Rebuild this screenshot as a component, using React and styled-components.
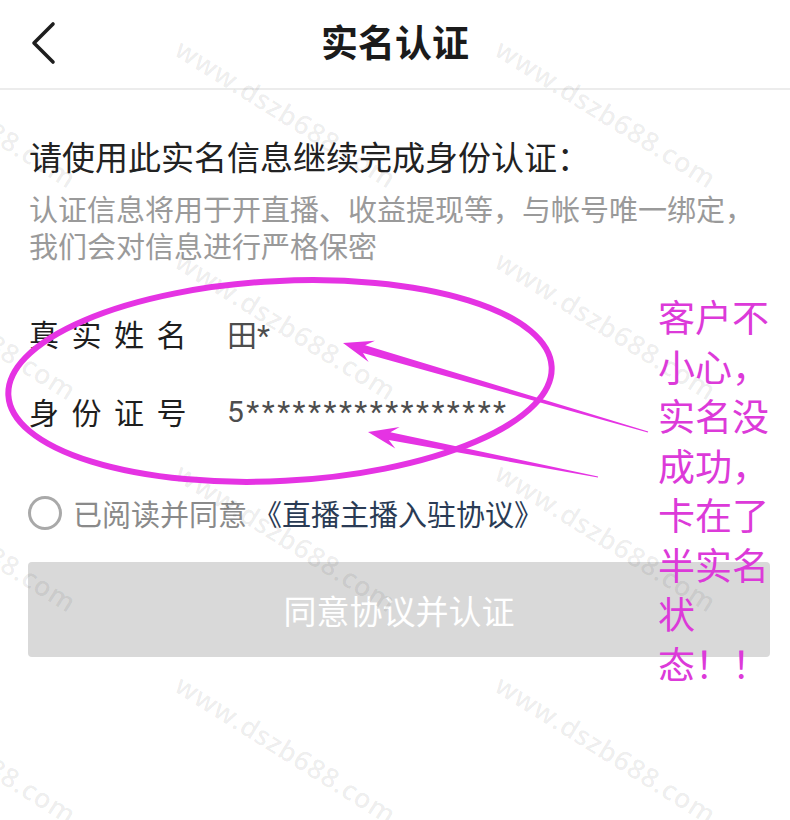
import React from 'react'
import styled, { createGlobalStyle } from 'styled-components'

const Global = createGlobalStyle`
  html, body { margin: 0; padding: 0; background: #fff; }
  body { font-family: "Noto Sans CJK SC", "Noto Sans", sans-serif; }
`

const MAGENTA = '#e533e3'

const Page = styled.div`
  position: relative;
  width: 790px;
  height: 820px;
  overflow: hidden;
  background: #fff;
`

const Header = styled.header`
  height: 88px;
  border-bottom: 2px solid #ececec;
  display: flex;
  align-items: center;
  justify-content: center;
  position: relative;
`

const Back = styled.button`
  position: absolute;
  left: 24px;
  top: 16px;
  width: 40px;
  height: 54px;
  padding: 0;
  border: 0;
  background: transparent;
  display: flex;
  align-items: center;
  justify-content: center;
`

const Title = styled.h1`
  margin: 0;
  margin-top: -6px;
  font-size: 37px;
  font-weight: 600;
  color: #1b1b1b;
`

const Body = styled.main`
  padding: 0 20px 0 28px;
`

const Heading = styled.h2`
  margin: 46px 0 0 1px;
  font-size: 33px;
  line-height: 40px;
  font-weight: 400;
  color: #222;
`

const Note = styled.p`
  margin: 14px 0 0 1px;
  font-size: 29px;
  line-height: 37px;
  color: #9a9a9a;
`

const Fields = styled.div`
  margin-top: 47px;
  display: flex;
  flex-direction: column;
  gap: 38px;
`

const Row = styled.div`
  display: grid;
  grid-template-columns: 199px 1fr;
  align-items: center;
  height: 40px;
`

const Label = styled.span`
  font-size: 30px;
  letter-spacing: 12.5px;
  color: #1e1e1e;
  padding-left: 1px;
`

const Value = styled.span`
  font-family: Roboto, "Noto Sans CJK SC", sans-serif;
  font-size: 30px;
  color: #4d4d4d;
  letter-spacing: ${p => (p.$masked ? '2.5px' : '0')};
`

const Agree = styled.label`
  margin-top: 64px;
  height: 40px;
  display: flex;
  align-items: center;
  gap: 11px;
  font-size: 29px;
  color: #8a8a8a;
`

const Radio = styled.span`
  width: 28px;
  height: 28px;
  border: 3px solid #a9a9a9;
  border-radius: 50%;
  flex: none;
`

const Link = styled.a`
  margin-left: 6px;
  color: #2a3b55;
  text-decoration: none;
`

const Submit = styled.button`
  margin-top: 29px;
  width: 742px;
  height: 95px;
  border: 0;
  border-radius: 4px;
  background: #d9d9d9;
  color: #fff;
  font-family: "Noto Sans CJK SC", sans-serif;
  font-size: 33px;
  display: flex;
  align-items: center;
  justify-content: center;
`

const Overlay = styled.svg`
  position: absolute;
  inset: 0;
  pointer-events: none;
`

const Remark = styled.div`
  position: absolute;
  left: 658px;
  top: 292px;
  font-size: 37px;
  line-height: 49.5px;
  color: #dc3ad9;
`

const Watermark = styled.div.attrs(p => ({ style: { left: p.$x, top: p.$y } }))`
  position: absolute;
  transform-origin: 0 0;
  transform: rotate(32deg);
  white-space: nowrap;
  font-family: "Open Sans", sans-serif;
  font-weight: 600;
  font-size: 27px;
  letter-spacing: 0.8px;
  color: rgba(0, 0, 0, 0.08);
  pointer-events: none;
`

// wedge arrow: thick at the head, thin at the tail
function arrowPoints(tip, tail) {
  const dx = tail[0] - tip[0]
  const dy = tail[1] - tip[1]
  const len = Math.hypot(dx, dy)
  const u = [dx / len, dy / len]
  const n = [-u[1], u[0]]
  const at = (d, w) => [tip[0] + u[0] * d + n[0] * w, tip[1] + u[1] * d + n[1] * w]
  const pts = [
    tip,
    at(30, 11),
    at(22, 4),
    [tail[0] + n[0] * 0.6, tail[1] + n[1] * 0.6],
    [tail[0] - n[0] * 0.6, tail[1] - n[1] * 0.6],
    at(22, -4),
    at(30, -11),
  ]
  return pts.map(p => p.map(v => v.toFixed(1)).join(',')).join(' ')
}

const marks = []
for (const y of [30, 242, 454, 666]) {
  for (const x of [-132, 188, 508]) marks.push({ x, y })
}

const remark = ['客户不', '小心，', '实名没', '成功，', '卡在了', '半实名', '状', '态！！']

export default function App() {
  return (
    <Page>
      <Global />
      <Header>
        <Back aria-label="back">
          <svg width="30" height="44" viewBox="0 0 30 44">
            <polyline points="24,3 5,22 24,41" fill="none" stroke="#1e1e1e" strokeWidth="3.6" strokeLinecap="round" strokeLinejoin="round" />
          </svg>
        </Back>
        <Title>实名认证</Title>
      </Header>

      <Body>
        <Heading>请使用此实名信息继续完成身份认证：</Heading>
        <Note>
          认证信息将用于开直播、收益提现等，与帐号唯一绑定，
          <br />
          我们会对信息进行严格保密
        </Note>

        <Fields>
          <Row>
            <Label>真实姓名</Label>
            <Value>田*</Value>
          </Row>
          <Row>
            <Label>身份证号</Label>
            <Value $masked>5*****************</Value>
          </Row>
        </Fields>

        <Agree>
          <Radio />
          <span>
            已阅读并同意<Link>《直播主播入驻协议》</Link>
          </span>
        </Agree>

        <Submit>同意协议并认证</Submit>
      </Body>

      {marks.map((m, i) => (
        <Watermark key={i} $x={m.x} $y={m.y}>www.dszb688.com</Watermark>
      ))}

      <Overlay width="790" height="820" viewBox="0 0 790 820">
        <ellipse cx="280" cy="381" rx="272" ry="100" transform="rotate(-3 280 381)" fill="none" stroke={MAGENTA} strokeWidth="6" />
        <polygon points={arrowPoints([343, 343], [648, 432])} fill={MAGENTA} />
        <polygon points={arrowPoints([368, 432], [598, 477])} fill={MAGENTA} />
      </Overlay>

      <Remark>
        {remark.map(line => (
          <div key={line}>{line}</div>
        ))}
      </Remark>
    </Page>
  )
}
